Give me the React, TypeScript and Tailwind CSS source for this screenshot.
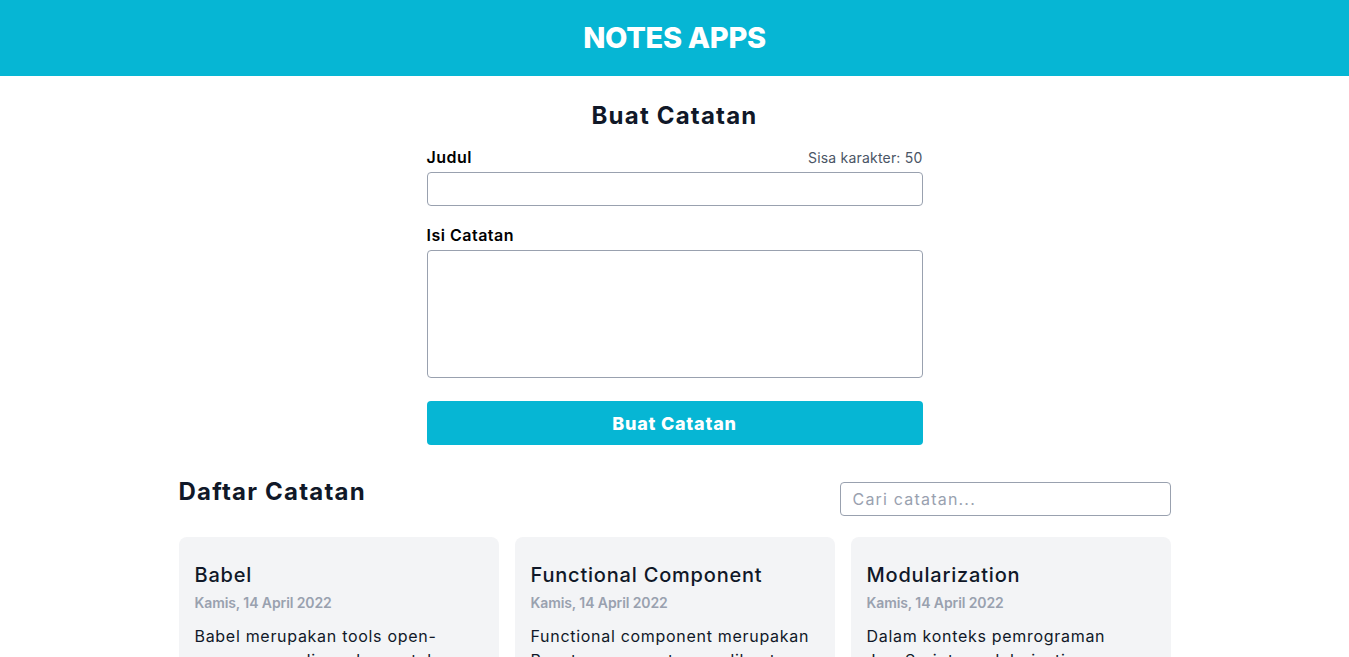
import React, { useState } from "react";

const notes = [
  {
    id: 1,
    title: "Babel",
    date: "Kamis, 14 April 2022",
    body: "Babel merupakan tools open-source yang digunakan untuk mengubah sintaks ECMAScript 2015+ menjadi sintaks yang didukung oleh JavaScript engine versi lama.",
  },
  {
    id: 2,
    title: "Functional Component",
    date: "Kamis, 14 April 2022",
    body: "Functional component merupakan React component yang dibuat menggunakan fungsi JavaScript.",
  },
  {
    id: 3,
    title: "Modularization",
    date: "Kamis, 14 April 2022",
    body: "Dalam konteks pemrograman JavaScript, modularization merupakan teknik dalam memecah atau menggunakan kode dalam berkas JavaScript secara terpisah.",
  },
];

export default function App() {
  const [title, setTitle] = useState("");
  const font = { fontFamily: "Inter, 'Noto Sans', sans-serif" };
  return (
    <div className="min-h-screen bg-white text-gray-900" style={font}>
      <header className="h-[76px] bg-[#06b6d4] flex items-center justify-center">
        <h1 className="text-[29px] font-extrabold text-white tracking-[-0.3px]">NOTES APPS</h1>
      </header>
      <main className="pt-6">
        <section className="w-[496px] mx-auto">
          <h2 className="text-[24px] leading-8 font-bold text-center tracking-[1.2px]">Buat Catatan</h2>
          <div className="mt-[13px] flex items-center justify-between h-6 mb-[3px]">
            <label className="text-[16px] font-semibold text-black tracking-[0.5px]">Judul</label>
            <span className="text-[14px] text-gray-600 tracking-[0.2px]">Sisa karakter: {50 - title.length}</span>
          </div>
          <input
            value={title}
            onChange={(e) => setTitle(e.target.value.slice(0, 50))}
            className="block w-full h-[34px] border border-gray-400 rounded px-3 outline-none"
          />
          <label className="block mt-[17px] h-6 leading-6 mb-[3px] text-[16px] font-semibold text-black tracking-[0.5px]">Isi Catatan</label>
          <textarea className="block w-full h-[128px] border border-gray-400 rounded px-3 py-2 resize-none outline-none" />
          <button className="mt-[23px] w-full h-[44px] rounded bg-[#06b6d4] text-white text-[18px] font-extrabold tracking-[0.75px]">
            Buat Catatan
          </button>
        </section>
        <section className="w-[992px] mx-auto mt-[31px]">
          <div className="flex items-start justify-between">
            <h2 className="text-[24px] leading-8 font-bold tracking-[1.2px]">Daftar Catatan</h2>
            <input
              placeholder="Cari catatan..."
              className="mt-[6px] w-[331px] h-[34px] border border-gray-400 rounded px-3 text-[16px] tracking-[1.2px] placeholder:text-gray-400 outline-none"
            />
          </div>
          <div className="mt-[21px] grid grid-cols-3 gap-4">
            {notes.map((n) => (
              <article key={n.id} className="bg-gray-100 rounded-lg px-4 pt-6 pb-4">
                <h3 className="text-[20px] leading-7 font-medium text-gray-900 tracking-[0.8px]">{n.title}</h3>
                <p className="mt-1 text-[14px] leading-5 font-semibold text-gray-400 tracking-[-0.1px]">{n.date}</p>
                <p className="mt-[11px] text-[16px] leading-6 text-gray-900 tracking-[0.7px]">{n.body}</p>
              </article>
            ))}
          </div>
        </section>
      </main>
    </div>
  );
}
